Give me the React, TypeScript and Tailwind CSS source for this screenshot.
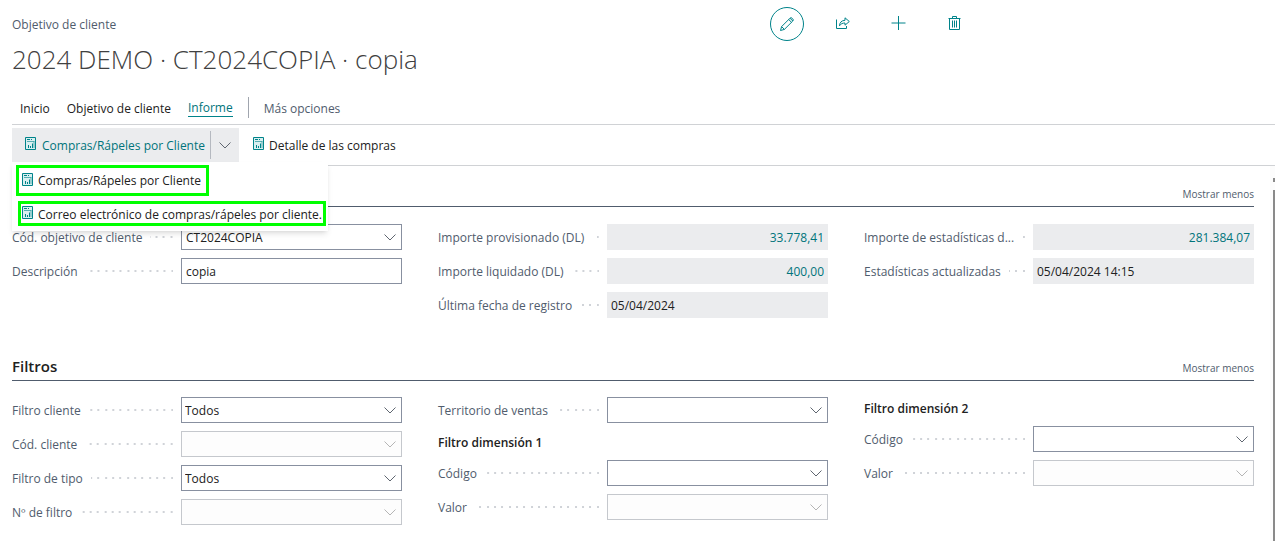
import { useId } from 'react';
import type { ReactNode } from 'react';

function PencilIcon() {
  return (
    <svg viewBox="0 0 16 16" fill="none" stroke="currentColor" strokeWidth="1" className="w-4 h-4" aria-hidden>
      <path d="M1.500 14.500 2.600 10.600 11 2.200a1.500 1.500 0 0 1 2.100 0l.7.7a1.500 1.500 0 0 1 0 2.100L5.400 13.400ZM2.600 10.600 5.400 13.400M9.700 3.500 12.500 6.300M11 2.200 13.800 5" />
    </svg>
  );
}

function ShareIcon() {
  return (
    <svg viewBox="0 0 16 16" fill="none" stroke="currentColor" strokeWidth="1" className="w-4 h-4" aria-hidden>
      <path d="M1.500 3.500v9h10v-2.500" />
      <path d="M4.500 9.800c.2-3.400 2-5.300 5.500-5.500V1.800L14.300 5.500 10 9.200V7c-2.500 0-4.200.8-5.500 2.800Z" />
    </svg>
  );
}

function PlusIcon() {
  return (
    <svg viewBox="0 0 16 16" fill="none" stroke="currentColor" strokeWidth="1" className="w-4 h-4" aria-hidden>
      <path d="M7.500 0v14M.5 7h14" />
    </svg>
  );
}

function TrashIcon() {
  return (
    <svg viewBox="0 0 16 16" fill="none" stroke="currentColor" strokeWidth="1" className="w-4 h-4" aria-hidden>
      <path d="M1.500 2.500h12M5.500 2.500v-2h4v2M2.500 2.500v11h10v-11" />
      <path d="M5.500 4.500v7M7.500 4.500v7M9.500 4.500v7" />
    </svg>
  );
}

function ReportIcon() {
  return (
    <svg viewBox="0 0 12 14" fill="none" stroke="currentColor" strokeWidth="1" className="w-3 h-3.5 mb-0.5 shrink-0 text-[#00838a]" aria-hidden>
      <path d="M.5.5h10v12H.5Z" fill="#d9eff0" />
      <path d="M2 2.500h3M6 2.500h1" />
      <path d="M2 4.500h7.500M9 4.500v6.500" strokeOpacity=".6" />
      <path d="M3.500 11V8M5.500 11V9M7.500 11V6.500" />
    </svg>
  );
}

function Chevron() {
  return (
    <svg viewBox="0 0 12 7" fill="none" stroke="currentColor" strokeWidth="1" className="w-3 h-[7px]" aria-hidden>
      <path d="M.5.5 6 6 11.500.5" />
    </svg>
  );
}

type FieldProps = {
  label: string;
  value?: string;
  kind?: 'text' | 'lookup' | 'select' | 'amount' | 'readonly';
  disabled?: boolean;
};

function Field({ label, value = '', kind = 'lookup', disabled = false }: FieldProps) {
  const id = useId();
  const frame = disabled ? 'border-[#c5c8cd] bg-[#fdfdfd] text-[#b5b5b5]' : 'border-[#8890a0] bg-white text-[#5f6670]';

  return (
    <div className="flex h-[26px] items-center">
      <div className="flex w-[161px] mr-2 shrink-0 items-center gap-2">
        <label htmlFor={id} className="pt-0.5 whitespace-nowrap text-[#505c6d]">{label}</label>
        {/* dot leader, anchored right so the rows line up */}
        <span className="h-0.5 flex-1 bg-right bg-repeat-x bg-[size:22px_2px] bg-[linear-gradient(90deg,transparent_5px,#d0d3d8_5px_7px,transparent_7px_12px,#d0d3d8_12px_14px,transparent_14px_20px,#d0d3d8_20px)]" />
      </div>
      {kind === 'amount' && (
        <input id={id} readOnly defaultValue={value} className="w-full min-w-0 h-full px-1 bg-[#ebecee] text-right text-[#00747b] outline-none" />
      )}
      {kind === 'readonly' && (
        <input id={id} readOnly defaultValue={value} className="w-full min-w-0 h-full px-1 bg-[#ebecee] text-[#212121] outline-none" />
      )}
      {kind === 'text' && (
        <input id={id} defaultValue={value} className="w-full min-w-0 h-full px-1 border border-[#8890a0] text-[#212121] outline-none" />
      )}
      {kind === 'lookup' && (
        <div className={`flex flex-1 min-w-0 h-full items-center border ${frame}`}>
          <input id={id} defaultValue={value} disabled={disabled} className="flex-1 min-w-0 h-full px-1 text-[#212121] outline-none" />
          <button disabled={disabled} aria-label={`Buscar ${label}`} className="px-[5px] h-full"><Chevron /></button>
        </div>
      )}
      {kind === 'select' && (
        <div className={`grid flex-1 min-w-0 h-full items-center border ${frame}`}>
          <select id={id} defaultValue={value} className="col-start-1 row-start-1 w-full h-full px-[3px] pt-px appearance-none text-[#212121] outline-none">
            <option>{value}</option>
          </select>
          <span className="col-start-1 row-start-1 justify-self-end px-[5px] pointer-events-none"><Chevron /></span>
        </div>
      )}
    </div>
  );
}

function SectionHeader({ title }: { title?: string }) {
  return (
    <div className="flex h-[41px] items-end justify-between border-b border-[#505c6d]">
      {title ? <h2 className="text-[15px] leading-7 font-semibold text-[#212121]">{title}</h2> : <span />}
      <button className="text-[10px] leading-6 text-[#505c6d]">Mostrar menos</button>
    </div>
  );
}

function Column({ children }: { children: ReactNode }) {
  return <div className="flex flex-col gap-2 min-w-0">{children}</div>;
}

function GroupTitle({ children }: { children: ReactNode }) {
  return <h3 className="h-[21px] leading-6 font-semibold text-[#212121]">{children}</h3>;
}

export default function App() {
  return (
    <div className="bg-white font-['Open_Sans',sans-serif] text-[12px] text-[#212121]">
      <header className="pl-3">
        <div className="flex items-center pt-[7px]">
          <p className="w-3/5 pt-0.5 text-[#505c6d]">Objetivo de cliente</p>
          <div className="flex gap-[22px] text-[#00838a]">
            <button aria-label="Editar" className="flex w-[34px] h-[34px] items-center justify-center rounded-full border border-[#00838a]"><PencilIcon /></button>
            <button aria-label="Compartir" className="flex w-[34px] h-[34px] items-center justify-center"><ShareIcon /></button>
            <button aria-label="Nuevo" className="flex w-[34px] h-[34px] items-center justify-center"><PlusIcon /></button>
            <button aria-label="Eliminar" className="flex w-[34px] h-[34px] items-center justify-center"><TrashIcon /></button>
          </div>
        </div>
        <h1 className="text-[26px] leading-9 font-light text-[#404040]">2024 DEMO · CT2024COPIA · copia</h1>

        <nav className="flex items-center mt-5 pb-1.5 pl-2 border-b border-[#d0d2d5]">
          <a href="#inicio" className="mr-[17px] pt-0.5">Inicio</a>
          <a href="#objetivo" className="mr-[17px] pt-0.5">Objetivo de cliente</a>
          <a href="#informe" className="pt-0.5 border-b border-[#00838a] leading-4 text-[#00747b]">Informe</a>
          <span className="w-px h-[21px] mx-[15px] bg-[#a0a5ae]" />
          <a href="#mas" className="pt-0.5 text-[#505c6d]">Más opciones</a>
        </nav>

        <div className="flex py-[3px] border-b border-[#d0d2d5]">
          <div className="relative flex h-[34px] items-center bg-[#ebecee]">
            <button className="flex items-center gap-[5px] pl-[13px] pr-[5px] text-[#00747b]">
              <ReportIcon />
              <span className="pt-0.5">Compras/Rápeles por Cliente</span>
            </button>
            <button aria-label="Más informes" className="flex h-7 items-center px-2 border-l border-[#b5b9c0] text-[#5f6670]"><Chevron /></button>

            <div className="absolute left-0 top-full z-10 flex w-[316px] h-[69px] flex-col items-start gap-[5px] pt-[3px] bg-white shadow-md">
              <button className="flex h-[31px] items-center gap-1 ml-1 px-[3px] border-3 border-[#00ff00] whitespace-nowrap">
                <ReportIcon />
                <span className="pr-0.5">Compras/Rápeles por Cliente</span>
              </button>
              <button className="flex h-[25px] items-center gap-1 ml-1.5 pl-px border-3 border-[#00ff00] whitespace-nowrap">
                <ReportIcon />
                <span className="pt-0.5 pr-px">Correo electrónico de compras/rápeles por cliente.</span>
              </button>
            </div>
          </div>
          <button className="flex h-[34px] items-center gap-1 ml-3.5">
            <ReportIcon />
            <span className="pt-0.5">Detalle de las compras</span>
          </button>
        </div>
      </header>

      <div className="flex">
        <main className="flex-1 min-w-0 pl-3 pr-4 pb-4">
          <section aria-label="General">
            <SectionHeader />
            <div className="grid grid-cols-3 gap-x-9 pt-[17px] pb-[22px]">
              <Column>
                <Field label="Cód. objetivo de cliente" value="CT2024COPIA" />
                <Field label="Descripción" value="copia" kind="text" />
              </Column>
              <Column>
                <Field label="Importe provisionado (DL)" value="33.778,41" kind="amount" />
                <Field label="Importe liquidado (DL)" value="400,00" kind="amount" />
                <Field label="Última fecha de registro" value="05/04/2024" kind="readonly" />
              </Column>
              <Column>
                <Field label="Importe de estadísticas d..." value="281.384,07" kind="amount" />
                <Field label="Estadísticas actualizadas" value="05/04/2024 14:15" kind="readonly" />
              </Column>
            </div>
          </section>

          <section aria-label="Filtros">
            <SectionHeader title="Filtros" />
            <div className="grid grid-cols-3 gap-x-9 pt-4">
              <Column>
                <Field label="Filtro cliente" value="Todos" kind="select" />
                <Field label="Cód. cliente" disabled />
                <Field label="Filtro de tipo" value="Todos" kind="select" />
                <Field label="Nº de filtro" disabled />
              </Column>
              <Column>
                <Field label="Territorio de ventas" />
                <GroupTitle>Filtro dimensión 1</GroupTitle>
                <Field label="Código" />
                <Field label="Valor" disabled />
              </Column>
              <Column>
                <GroupTitle>Filtro dimensión 2</GroupTitle>
                <Field label="Código" />
                <Field label="Valor" disabled />
              </Column>
            </div>
          </section>
        </main>
        <div className="flex w-[5px] flex-col items-end bg-[#fcfcfc]" aria-hidden>
          <span className="w-0.5 h-1 mt-3 mb-2 bg-[#8a8a8a]" />
          <span className="w-0.5 flex-1 bg-[#8a8a8a]" />
        </div>
      </div>
    </div>
  );
}
